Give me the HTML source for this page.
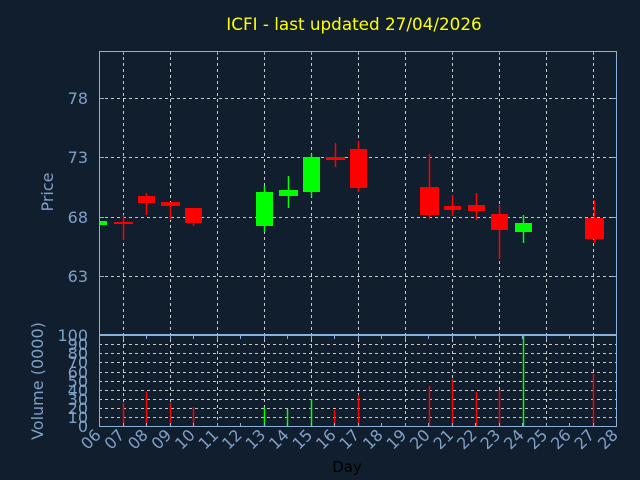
<!DOCTYPE html>
<html><head><meta charset="utf-8"><style>
html,body{margin:0;padding:0;background:#111e2e;width:640px;height:480px;overflow:hidden}
svg{display:block}
text{font-family:"DejaVu Sans","Liberation Sans",sans-serif}
</style></head><body>
<svg width="640" height="480" viewBox="0 0 640 480" xmlns="http://www.w3.org/2000/svg">
<rect width="640" height="480" fill="#111e2e"/>
<text x="354" y="30" fill="#ffff00" font-size="16.8" text-anchor="middle">ICFI - last updated 27/04/2026</text>
<g stroke="#c8c8c8" stroke-width="1" stroke-dasharray="3,3" fill="none">
<line x1="123.5" y1="51" x2="123.5" y2="427"/><line x1="170.5" y1="51" x2="170.5" y2="427"/>
<line x1="217.5" y1="51" x2="217.5" y2="427"/><line x1="264.5" y1="51" x2="264.5" y2="427"/>
<line x1="311.5" y1="51" x2="311.5" y2="427"/><line x1="358.5" y1="51" x2="358.5" y2="427"/>
<line x1="405.5" y1="51" x2="405.5" y2="427"/><line x1="452.5" y1="51" x2="452.5" y2="427"/>
<line x1="499.5" y1="51" x2="499.5" y2="427"/><line x1="546.5" y1="51" x2="546.5" y2="427"/>
<line x1="593.5" y1="51" x2="593.5" y2="427"/>
<line x1="99" y1="98.5" x2="617" y2="98.5"/><line x1="99" y1="157.5" x2="617" y2="157.5"/>
<line x1="99" y1="217.5" x2="617" y2="217.5"/><line x1="99" y1="276.5" x2="617" y2="276.5"/>
<line x1="99" y1="344.5" x2="617" y2="344.5"/><line x1="99" y1="353.5" x2="617" y2="353.5"/>
<line x1="99" y1="362.5" x2="617" y2="362.5"/><line x1="99" y1="372.5" x2="617" y2="372.5"/>
<line x1="99" y1="381.5" x2="617" y2="381.5"/><line x1="99" y1="390.5" x2="617" y2="390.5"/>
<line x1="99" y1="399.5" x2="617" y2="399.5"/><line x1="99" y1="408.5" x2="617" y2="408.5"/>
<line x1="99" y1="417.5" x2="617" y2="417.5"/>
</g>
<g stroke-width="1.5">
<line x1="123.5" y1="215" x2="123.5" y2="240" stroke="#ff0000"/>
<line x1="146.5" y1="193" x2="146.5" y2="215" stroke="#ff0000"/>
<line x1="170.5" y1="202" x2="170.5" y2="220" stroke="#ff0000"/>
<line x1="193.5" y1="208" x2="193.5" y2="226" stroke="#ff0000"/>
<line x1="264.5" y1="186" x2="264.5" y2="232" stroke="#00ff00"/>
<line x1="288.5" y1="176" x2="288.5" y2="208" stroke="#00ff00"/>
<line x1="311.5" y1="154" x2="311.5" y2="197" stroke="#00ff00"/>
<line x1="335.5" y1="143" x2="335.5" y2="167" stroke="#ff0000"/>
<line x1="358.5" y1="141" x2="358.5" y2="192" stroke="#ff0000"/>
<line x1="429.5" y1="154" x2="429.5" y2="219" stroke="#ff0000"/>
<line x1="452.5" y1="195" x2="452.5" y2="216" stroke="#ff0000"/>
<line x1="476.5" y1="193" x2="476.5" y2="220" stroke="#ff0000"/>
<line x1="499.5" y1="205" x2="499.5" y2="259" stroke="#ff0000"/>
<line x1="523.5" y1="215" x2="523.5" y2="243" stroke="#00ff00"/>
<line x1="594.5" y1="200" x2="594.5" y2="243" stroke="#ff0000"/>
</g>
<rect x="99" y="221" width="8" height="4" fill="#00ff00"/>
<rect x="114" y="222" width="19" height="2" fill="#ff0000"/>
<rect x="138" y="196" width="17" height="7" fill="#ff0000"/>
<rect x="161" y="202" width="19" height="4" fill="#ff0000"/>
<rect x="185" y="208" width="17" height="15" fill="#ff0000"/>
<rect x="256" y="192" width="17" height="34" fill="#00ff00"/>
<rect x="279" y="190" width="19" height="6" fill="#00ff00"/>
<rect x="303" y="157" width="17" height="35" fill="#00ff00"/>
<rect x="326" y="157" width="19" height="3" fill="#ff0000"/>
<rect x="350" y="149" width="17" height="39" fill="#ff0000"/>
<rect x="420" y="187" width="19" height="28" fill="#ff0000"/>
<rect x="444" y="206" width="17" height="4" fill="#ff0000"/>
<rect x="468" y="205" width="17" height="6" fill="#ff0000"/>
<rect x="491" y="214" width="17" height="16" fill="#ff0000"/>
<rect x="515" y="223" width="17" height="9" fill="#00ff00"/>
<rect x="585" y="218" width="19" height="21" fill="#ff0000"/>
<g stroke-width="1.5">
<line x1="123.5" y1="403" x2="123.5" y2="427" stroke="#ff0000"/>
<line x1="146.5" y1="392" x2="146.5" y2="427" stroke="#ff0000"/>
<line x1="170.5" y1="403" x2="170.5" y2="427" stroke="#ff0000"/>
<line x1="193.5" y1="407" x2="193.5" y2="427" stroke="#ff0000"/>
<line x1="264.5" y1="407" x2="264.5" y2="427" stroke="#00ff00"/>
<line x1="287.5" y1="409" x2="287.5" y2="427" stroke="#00ff00"/>
<line x1="311.5" y1="399" x2="311.5" y2="427" stroke="#00ff00"/>
<line x1="334.5" y1="410" x2="334.5" y2="427" stroke="#ff0000"/>
<line x1="358.5" y1="395" x2="358.5" y2="427" stroke="#ff0000"/>
<line x1="429.5" y1="386" x2="429.5" y2="427" stroke="#ff0000"/>
<line x1="452.5" y1="379" x2="452.5" y2="427" stroke="#ff0000"/>
<line x1="476.5" y1="392" x2="476.5" y2="427" stroke="#ff0000"/>
<line x1="499.5" y1="390" x2="499.5" y2="427" stroke="#ff0000"/>
<line x1="523.5" y1="335" x2="523.5" y2="427" stroke="#00ff00"/>
<line x1="593.5" y1="374" x2="593.5" y2="427" stroke="#ff0000"/>
</g>
<g stroke="#8cb0dc" stroke-width="1" fill="none">
<rect x="99.5" y="51.5" width="517" height="283"/>
<rect x="99.5" y="335.5" width="517" height="91"/>
<path d="M99 98.5h5M99 157.5h5M99 217.5h5M99 276.5h5M612 98.5h5M612 157.5h5M612 217.5h5M612 276.5h5"/>
<path d="M123.5 51v4M170.5 51v4M217.5 51v4M264.5 51v4M311.5 51v4M358.5 51v4M405.5 51v4M452.5 51v4M499.5 51v4M546.5 51v4M593.5 51v4"/>
<path d="M123.5 427v-4M146.5 427v-4M170.5 427v-4M193.5 427v-4M217.5 427v-4M240.5 427v-4M264.5 427v-4M287.5 427v-4M311.5 427v-4M334.5 427v-4M358.5 427v-4M381.5 427v-4M405.5 427v-4M428.5 427v-4M452.5 427v-4M475.5 427v-4M499.5 427v-4M522.5 427v-4M546.5 427v-4M569.5 427v-4M593.5 427v-4"/>
<path d="M123.5 335v4M146.5 335v4M170.5 335v4M193.5 335v4M217.5 335v4M240.5 335v4M264.5 335v4M287.5 335v4M311.5 335v4M334.5 335v4M358.5 335v4M381.5 335v4M405.5 335v4M428.5 335v4M452.5 335v4M475.5 335v4M499.5 335v4M522.5 335v4M546.5 335v4M569.5 335v4M593.5 335v4"/>
</g>
<g fill="#7fa0c8" font-size="16" text-anchor="end">
<text x="88" y="104">78</text><text x="88" y="163">73</text>
<text x="88" y="223">68</text><text x="88" y="282">63</text>
</g>
<g fill="#7fa0c8" font-size="16" text-anchor="end">
<text x="88" y="341">100</text><text x="88" y="350">90</text><text x="88" y="359">80</text>
<text x="88" y="368">70</text><text x="88" y="378">60</text><text x="88" y="387">50</text>
<text x="88" y="396">40</text><text x="88" y="405">30</text><text x="88" y="414">20</text>
<text x="88" y="423">10</text><text x="88" y="432">0</text>
</g>
<text transform="translate(53,192) rotate(-90)" fill="#7fa0c8" font-size="16" text-anchor="middle">Price</text>
<text transform="translate(43,381) rotate(-90)" fill="#7fa0c8" font-size="16" text-anchor="middle">Volume (0000)</text>
<text x="347" y="472" fill="#000000" font-size="15" text-anchor="middle">Day</text>
<g fill="#7fa0c8" font-size="16" text-anchor="end">
<text transform="translate(102,436) rotate(-45)">06</text>
<text transform="translate(125.5,436) rotate(-45)">07</text>
<text transform="translate(149,436) rotate(-45)">08</text>
<text transform="translate(172.5,436) rotate(-45)">09</text>
<text transform="translate(196,436) rotate(-45)">10</text>
<text transform="translate(219.5,436) rotate(-45)">11</text>
<text transform="translate(243,436) rotate(-45)">12</text>
<text transform="translate(266.5,436) rotate(-45)">13</text>
<text transform="translate(290,436) rotate(-45)">14</text>
<text transform="translate(313.5,436) rotate(-45)">15</text>
<text transform="translate(337,436) rotate(-45)">16</text>
<text transform="translate(360.5,436) rotate(-45)">17</text>
<text transform="translate(384,436) rotate(-45)">18</text>
<text transform="translate(407.5,436) rotate(-45)">19</text>
<text transform="translate(431,436) rotate(-45)">20</text>
<text transform="translate(454.5,436) rotate(-45)">21</text>
<text transform="translate(478,436) rotate(-45)">22</text>
<text transform="translate(501.5,436) rotate(-45)">23</text>
<text transform="translate(525,436) rotate(-45)">24</text>
<text transform="translate(548.5,436) rotate(-45)">25</text>
<text transform="translate(572,436) rotate(-45)">26</text>
<text transform="translate(595.5,436) rotate(-45)">27</text>
<text transform="translate(619,436) rotate(-45)">28</text>
</g>
</svg>
</body></html>
